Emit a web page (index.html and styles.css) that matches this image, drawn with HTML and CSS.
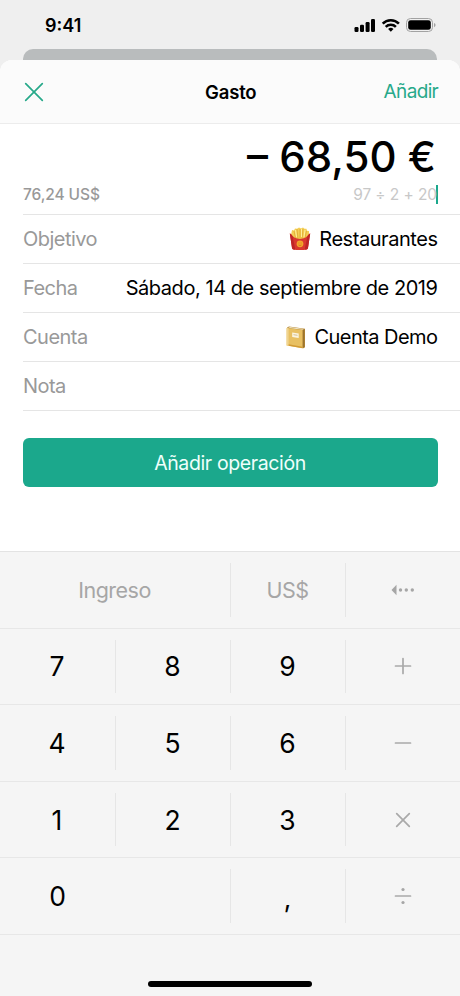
FILE: index.html
```html
<!DOCTYPE html>
<html lang="es">
<head>
<meta charset="utf-8">
<title>Gasto</title>
<link rel="stylesheet" href="styles.css">
</head>
<body>
<div class="phone">
  <div class="status">
    <span class="time">9:41</span>
    <svg class="status-icons" width="84" height="18" viewBox="0 0 84 18">
      <rect x="0.5" y="10" width="4" height="5" rx="1.2"/>
      <rect x="6" y="7.7" width="4" height="7.3" rx="1.2"/>
      <rect x="11.6" y="5" width="4" height="10" rx="1.2"/>
      <rect x="17" y="2" width="4" height="13" rx="1.2"/>
      <g fill="none" stroke="#000" stroke-width="2.5">
        <path d="M28.7 6.6a11.3 11.3 0 0 1 16.200 0"/>
        <path d="M31.700 9.900a7.200 7.200 0 0 1 10.200 0"/>
      </g>
      <path d="M36.800 14.700l-2.700-2.700a4 4 0 0 1 5.400 0z"/>
      <rect x="52.500" y="1.500" width="26" height="13" rx="4" fill="none" stroke="#a2a2a2" stroke-width="1"/>
      <rect x="54.200" y="3.200" width="22.600" height="9.600" rx="2.400"/>
      <path d="M80 6v4.200q1.600-.7 1.600-2.100t-1.600-2.100z" fill="#a2a2a2"/>
    </svg>
  </div>
  <div class="card-behind"></div>
  <main class="sheet">
    <header class="bar">
      <svg class="close" width="20" height="20" viewBox="0 0 20 20"><path d="M1.700 1.700l16.600 16.600M18.300 1.700L1.700 18.300"/></svg>
      <h1 class="title">Gasto</h1>
      <span class="add">Añadir</span>
    </header>
    <section class="amount">
      <div class="total">– 68,50 €</div>
      <div class="sub">
        <span class="converted">76,24 US$</span>
        <span class="expr">97 ÷ 2 + 20</span>
      </div>
    </section>
    <section class="fields">
      <div class="row"><span class="label">Objetivo</span><span class="value">
        <svg class="fries" width="22" height="24" viewBox="0 0 22 24">
          <path d="M2 8L3 3l2 .5L6 1.500l2 .3L10 .5l2 1 2-1 1.500 1.200 2 0 .5 2 2 .3L20 9l-3 6H5z" fill="#f4cf55"/>
          <path d="M5 4l1.500 7M8 2l1 10M11 2v10M14 2l-1 10M17.500 4L16 11" stroke="#d99b26" stroke-width=".6" fill="none"/>
          <path d="M6.500 3l1 7M12.500 2v8M16 3l-1 7" stroke="#ffef9b" stroke-width="1" fill="none"/>
          <path d="M.8 6.500q1 .2 1.500 1Q5 11.500 11 12q6-.5 8.700-4.500.5-.8 1.500-1L19 21q-.2 1.200-1.400 1.500-6.600 1.200-13.200 0Q3.200 22.200 3 21z" fill="#d9382f"/>
          <path d="M.8 6.500L3 21q.2 1.200 1.400 1.500l2 .3L3.500 9Q2 6.700.8 6.500zM21.200 6.500L19 21q-.2 1.200-1.400 1.500l-2 .3L18.500 9q1.500-2.300 2.700-2.500z" fill="#bf2527"/>
          <circle cx="11" cy="16.800" r="3.400" fill="#f2a52b"/>
          <path d="M9.500 16h.8M11.700 16h.8M9.500 18q1.500 1 3 0" stroke="#cf6a20" stroke-width=".8" fill="none"/>
        </svg><span>Restaurantes</span></span></div>
      <div class="row"><span class="label">Fecha</span><span class="value date">Sábado, 14 de septiembre de 2019</span></div>
      <div class="row"><span class="label">Cuenta</span><span class="value account">
        <svg class="book" width="20" height="23" viewBox="0 0 20 23">
          <path d="M1 1.500L3 .5l16 2.300v18.500l-1.500.9-1.700-.2z" fill="#b98a35"/>
          <path d="M16.500 3.800l2-.8v18l-2 1z" fill="#9b742f"/>
          <path d="M2 2L4 1l14 2-1.600.8z" fill="#eee3c5"/>
          <path d="M.6 2L16.500 4v18.300L.6 19.400z" fill="#e8c062"/>
          <path d="M.6 2l2 .3v17.500l-2-.4z" fill="#f0d490"/>
          <path d="M2.600 18.200l13.900 2.500v1.600L2.600 19.800z" fill="#d29b35"/>
          <path d="M6.200 6.600l6.500.9v4.600l-6.500-1z" fill="#fbf4df"/>
          <path d="M7.500 8.700l4 .6" stroke="#c4a76b" stroke-width=".7"/>
        </svg><span>Cuenta Demo</span></span></div>
      <div class="row"><span class="label">Nota</span></div>
    </section>
    <div class="action"><button class="submit">Añadir operación</button></div>
    <section class="keypad">
      <div class="keys">
        <div class="key wide word">Ingreso</div>
        <div class="key word">US$</div>
        <div class="key"><svg width="26" height="12" viewBox="0 0 26 12"><path d="M6.500 .8v10.400L1.500 6z"/><circle cx="10.500" cy="6" r="1.700"/><circle cx="16.300" cy="6" r="1.700"/><circle cx="22.300" cy="6" r="1.700"/></svg></div>
      </div>
      <div class="keys">
        <div class="key">7</div><div class="key">8</div><div class="key">9</div>
        <div class="key"><svg width="18" height="18" viewBox="0 0 18 18"><path class="op" d="M1.500 9h15M9 1.500v15"/></svg></div>
      </div>
      <div class="keys">
        <div class="key">4</div><div class="key">5</div><div class="key">6</div>
        <div class="key"><svg width="18" height="18" viewBox="0 0 18 18"><path class="op" d="M1.500 9h15"/></svg></div>
      </div>
      <div class="keys">
        <div class="key">1</div><div class="key">2</div><div class="key">3</div>
        <div class="key"><svg width="18" height="18" viewBox="0 0 18 18"><path class="op" d="M2.700 2.700l12.600 12.600M15.300 2.700L2.700 15.300"/></svg></div>
      </div>
      <div class="keys">
        <div class="key zero">0</div><div class="key comma">,</div>
        <div class="key"><svg width="18" height="18" viewBox="0 0 18 18"><path class="op" d="M1.500 9h15"/><circle cx="9" cy="2.500" r="1.600"/><circle cx="9" cy="15.500" r="1.600"/></svg></div>
      </div>
      <div class="home"></div>
    </section>
  </main>
</div>
</body>
</html>
```
FILE: styles.css
```css
* { box-sizing: border-box; }
body { margin: 0; font-family: Inter, "Liberation Sans", sans-serif; color: #000; background: #efefef; }
svg { display: block; flex: none; }
.phone { width: 460px; height: 996px; display: flex; flex-direction: column; background: #efefef; overflow: hidden; }
.status { height: 49px; padding: 0 22px 0 45px; display: flex; justify-content: space-between; align-items: flex-start; }
.time { margin-top: 14px; font-size: 18px; line-height: 24px; font-weight: 600; letter-spacing: 0; }
.status-icons { margin-top: 17px; }
.card-behind { height: 11px; margin: 0 23px; background: #b9bcbd; border-radius: 10px 10px 0 0; }
.sheet { flex: 1; display: flex; flex-direction: column; background: #fff; border-radius: 12px 12px 0 0; overflow: hidden; }
.bar { height: 64px; padding: 0 22.500px 0 24px; display: grid; grid-template-columns: 1fr auto 1fr; align-items: center; background: #fbfbfb; border-bottom: 1px solid #ececec; }
.close path { stroke: #27a98a; stroke-width: 1.7; fill: none; stroke-linecap: round; }
.title { margin: 0; font-size: 18.500px; line-height: 24px; font-weight: 600; letter-spacing: -0.2px; }
.add { justify-self: end; color: #27a98a; font-size: 19px; line-height: 24px; letter-spacing: -0.650px; margin-right: -0.6px; }
.amount { height: 90px; padding-left: 23px; }
.total { height: 56px; padding: 8px 24px 0 0; text-align: right; font-size: 42px; line-height: 50px; font-weight: 500; }
.sub { height: 30px; padding-right: 22px; display: flex; justify-content: space-between; align-items: center; font-size: 15.500px; line-height: 20px; }
.converted { color: #999; font-weight: 500; letter-spacing: -0.1px; }
.expr { height: 19px; line-height: 20px; color: #c8c8c8; letter-spacing: -0.080px; margin-top: -1px; background: linear-gradient(#1ba88c, #1ba88c) right / 2px 100% no-repeat; padding-right: 1px; }
.fields { padding-left: 23px; }
.row { height: 48.900px; padding: 1px 22.500px 0 0; display: flex; justify-content: space-between; align-items: center; border-top: 1px solid #e5e5e5; font-size: 20px; line-height: 24px; letter-spacing: -0.450px; }
.row:last-child { height: 50px; border-bottom: 1px solid #e5e5e5; }
.label { color: #999; letter-spacing: -0.530px; }
.value { display: flex; align-items: center; white-space: nowrap; }
.account { letter-spacing: -0.550px; }
.fries { margin-right: 8px; }
.book { margin-right: 9px; }
.action { padding: 27px 22.500px 0; }
.submit { display: block; width: 100%; height: 49px; padding: 1px 0 0; border: 0; border-radius: 6px; background: #1ba88c; color: #effffb; font: 400 19.500px/24px Inter, "Liberation Sans", sans-serif; letter-spacing: -0.380px; }
.keypad { margin-top: auto; height: 445px; background: #f5f5f5; border-top: 1px solid #e3e3e3; display: flex; flex-direction: column; }
.keys { height: 76.600px; display: grid; grid-template-columns: repeat(4, 1fr); padding: 11px 0; border-bottom: 1px solid #e7e7e7; }
.key { display: flex; align-items: center; justify-content: center; border-left: 1px solid #e6e6e6; padding-right: 1px; font-size: 26.500px; line-height: 32px; }
.key:first-child { border-left: 0; }
.wide { grid-column: span 2; }
.zero { grid-column: span 2; padding-right: 115px; }
.comma { padding-top: 4px; }
.word { font-size: 21.500px; color: #a6a6a6; letter-spacing: -0.500px; }
.key svg { fill: #a6a6a6; }
.key .op { stroke: #a9a9a9; stroke-width: 1.700; fill: none; stroke-linecap: round; }
.home { width: 164px; height: 6px; margin: 46px auto 0; border-radius: 3px; background: #000; }
```
